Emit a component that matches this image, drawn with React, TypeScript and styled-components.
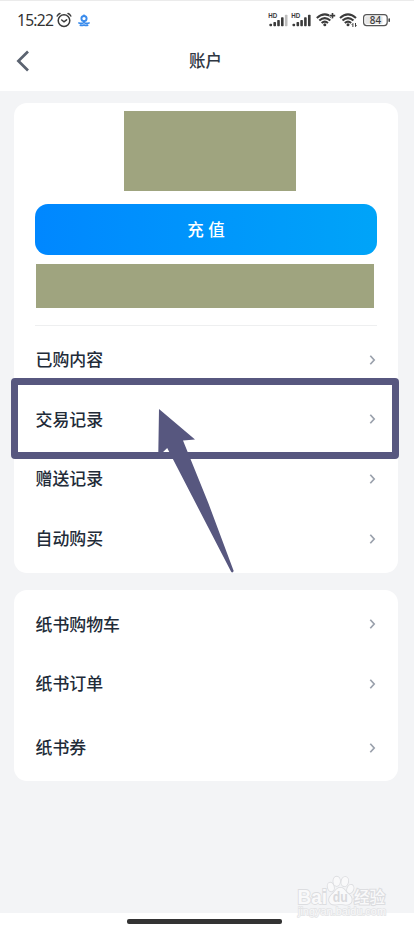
import React from "react";
import styled, { createGlobalStyle } from "styled-components";

const Global = createGlobalStyle`
  * { box-sizing: border-box; }
  body { margin: 0; background: #fff; }
`;

const Screen = styled.div`
  position: relative;
  width: 414px;
  height: 930px;
  overflow: hidden;
  display: flex;
  flex-direction: column;
  background: #fff;
  border-top: 1px solid #ebebeb;
  color: #222b38;
  font-family: "Noto Sans CJK SC", sans-serif;
`;

const StatusBar = styled.div`
  height: 38px;
  display: flex;
  align-items: center;
  padding: 0 23px 0 17px;
`;

const Clock = styled.span`
  width: 38px;
  font: 400 15.6px/20px "Noto Sans", sans-serif;
  letter-spacing: -0.75px;
  color: #333;
`;

const Icons = styled.svg`
  display: block;
  flex: none;
`;

const Spacer = styled.div`
  flex: 1;
`;

const NavBar = styled.header`
  height: 52px;
  display: grid;
  grid-template-columns: 60px 1fr 60px;
  align-items: center;
  padding-bottom: 8px;
`;

const BackIcon = styled.svg`
  margin-left: 14px;
`;

const Title = styled.h1`
  margin: 0;
  text-align: center;
  font-size: 16.5px;
  line-height: 24px;
  font-weight: 500;
  color: #2f3742;
  padding: 0 3px 2px 0;
`;

const Content = styled.main`
  height: 822px;
  display: flex;
  flex-direction: column;
  gap: 17px;
  padding: 12px 16px 0 14px;
  background: #f3f4f6;
`;

const Card = styled.section<{ $height: number; $top?: number }>`
  height: ${(p) => p.$height}px;
  padding: ${(p) => p.$top ?? 0}px 21px 0;
  display: flex;
  flex-direction: column;
  background: #fff;
  border-radius: 13px;
`;

const Redaction = styled.div<{ $w: number; $h: number; $left: number }>`
  flex: none;
  width: ${(p) => p.$w}px;
  height: ${(p) => p.$h}px;
  margin-left: ${(p) => p.$left}px;
  background: #9fa47f;
`;

const Recharge = styled.button`
  flex: none;
  height: 51px;
  margin: 13px 0 9px;
  padding: 0 0 2px;
  border: 0;
  border-radius: 13px;
  background: linear-gradient(90deg, #0087ff, #00a4f8);
  color: #fff;
  font: 500 16.5px/24px "Noto Sans CJK SC", sans-serif;
  word-spacing: 1px;
`;

const Divider = styled.div`
  flex: none;
  height: 1px;
  margin: 17px 0 4px;
  background: #eeeff0;
`;

const Row = styled.div<{ $height?: number }>`
  flex: none;
  height: ${(p) => p.$height ?? 59.6}px;
  display: flex;
  align-items: center;
  justify-content: space-between;
  padding: 0 1.5px 0 0.5px;
  font-size: 16.9px;
  line-height: 24px;
  font-weight: 500;
`;

const Label = styled.span`
  padding-bottom: 1px;
`;

const Chevron = styled.svg`
  display: block;
`;

const HomeArea = styled.footer`
  flex: 1;
  display: flex;
  justify-content: center;
  padding: 6px 5px 0 0;
`;

const HomeIndicator = styled.div`
  width: 155px;
  height: 4.5px;
  border-radius: 2px;
  background: #333;
`;

const Highlight = styled.div`
  position: absolute;
  left: 11px;
  top: 377px;
  width: 388px;
  height: 81px;
  border: 7px solid #57577f;
  border-radius: 4px;
`;

const Arrow = styled.svg`
  position: absolute;
  left: 155px;
  top: 404px;
`;

const Watermark = styled.svg`
  position: absolute;
  left: 290px;
  top: 869px;
`;

function StatusLeft() {
  return (
    <Icons width="38" height="20" viewBox="55 10 38 20" fill="none">
      <g stroke="#3b3b3b" strokeWidth="1.5" strokeLinecap="round">
        <circle cx="64" cy="20.6" r="5.8" />
        <path d="M57.2 16Q58.2 14.2 60 13.5M70.8 16Q69.8 14.2 68 13.5M61.7 20l2.3 1.8 2.6-2" />
      </g>
      <g stroke="#398bec">
        <circle cx="84" cy="18.6" r="2.6" strokeWidth="1.9" />
        <path d="M84 14.6v2M84 20.6v2" strokeWidth="1.4" />
        <path d="M78.3 22.6q2.8 1.6 5.7 0q2.9 1.6 5.7 0M79.7 24.9q2.1 .9 4.3 0q2.1 .9 4.3 0" strokeWidth="1.6" />
      </g>
    </Icons>
  );
}

function Signal({ x, faded }: { x: number; faded?: boolean }) {
  return (
    <g transform={`translate(${x} 0)`} fill="#3b3b3b">
      <text x="0" y="18.3" fontFamily="Liberation Sans" fontWeight="700" fontSize="6.6" textLength="9" lengthAdjust="spacingAndGlyphs">HD</text>
      <rect x="1.2" y="23.8" width="2.6" height="2.4" rx=".8" />
      <rect x="5.2" y="22" width="2.6" height="4.2" rx=".7" />
      <rect x="9" y="20" width="2.6" height="6.2" rx=".7" />
      <rect x="12.8" y="17.3" width="2.6" height="8.9" rx=".7" />
      <rect x="16.7" y="14.7" width="2.6" height="11.5" rx=".7" fill={faded ? "#bdbdbd" : "#3b3b3b"} />
    </g>
  );
}

function Wifi({ x }: { x: number }) {
  return (
    <g transform={`translate(${x} 0)`}>
      <path d="M-8 18Q0 10.8 8 18M-5.5 20.6Q0 15.6 5.5 20.6M-3.2 23Q0 20.2 3.2 23" fill="none" stroke="#3b3b3b" strokeWidth="2" />
      <circle cx="0" cy="24.8" r="1.5" fill="#3b3b3b" />
    </g>
  );
}

function StatusRight() {
  return (
    <Icons width="124" height="20" viewBox="267 10 124 20">
      <Signal x={268.2} faded />
      <Signal x={291.3} />
      <Wifi x={324.8} />
      <path d="M329.5 15.6h6M332.5 12.6v6" stroke="#fff" strokeWidth="3" />
      <path d="M329.8 15.6h5.4M332.5 12.9v5.4" stroke="#3b3b3b" strokeWidth="1.6" />
      <Wifi x={348} />
      <path d="M352.9 27v-3.5l-1.1 1.2M355.5 23v3.6l1.1-1.2" fill="none" stroke="#fff" strokeWidth="2.5" />
      <path d="M352.9 27v-3.5l-1.1 1.2M355.5 23v3.6l1.1-1.2" fill="none" stroke="#3b3b3b" strokeWidth="1" />
      <rect x="363.6" y="14.6" width="23.6" height="11" rx="3" fill="#fff" stroke="#555" strokeWidth="1.2" />
      <rect x="365.2" y="16.2" width="17.3" height="7.8" rx="1" fill="#e6e6e6" />
      <rect x="388.4" y="18.3" width="1.6" height="3.6" rx=".7" fill="#444" />
      <text x="375.4" y="23.7" textAnchor="middle" fontFamily="Noto Sans" fontWeight="500" fontSize="9.8" fill="#3d3d3d">84</text>
    </Icons>
  );
}

function MenuRow({ label, height }: { label: string; height?: number }) {
  return (
    <Row $height={height}>
      <Label>{label}</Label>
      <Chevron width="7" height="12" viewBox="0 0 7 12" fill="none">
        <path d="M1.3 1.7L5.2 6 1.3 10.3" stroke="#9aa1ac" strokeWidth="1.7" />
      </Chevron>
    </Row>
  );
}

export default function App() {
  return (
    <>
      <Global />
      <Screen>
        <StatusBar>
          <Clock>15:22</Clock>
          <StatusLeft />
          <Spacer />
          <StatusRight />
        </StatusBar>
        <NavBar>
          <BackIcon width="16" height="24" viewBox="0 0 16 24" fill="none">
            <path d="M14 2.5L4.4 12 14 21.5" stroke="#5b6370" strokeWidth="2.7" />
          </BackIcon>
          <Title>账户</Title>
        </NavBar>
        <Content>
          <Card $height={470} $top={8}>
            <Redaction $w={172} $h={80} $left={89} />
            <Recharge>充 值</Recharge>
            <Redaction $w={338} $h={44} $left={1} />
            <Divider />
            <MenuRow label="已购内容" />
            <MenuRow label="交易记录" />
            <MenuRow label="赠送记录" />
            <MenuRow label="自动购买" />
          </Card>
          <Card $height={191} $top={4.4}>
            <MenuRow label="纸书购物车" />
            <MenuRow label="纸书订单" />
            <MenuRow label="纸书券" height={68} />
          </Card>
        </Content>
        <HomeArea>
          <HomeIndicator />
        </HomeArea>
        <Highlight />
        <Arrow width="84" height="172" viewBox="155 405 84 172">
          <path d="M159 409L195 439.5 183 440.5 208.3 503 233.7 571Q232.5 573.5 231 571.5L167.2 448 162 453H158.3z" fill="#57577f" />
        </Arrow>
        <Watermark width="110" height="52" viewBox="290 870 110 52">
          <g fill="#f9f9fa" stroke="#dcdde0" strokeWidth="1.8" paintOrder="stroke" fontFamily="Liberation Sans" fontWeight="700">
            <text x="297.5" y="903.5" fontSize="20.5" textLength="29.5" lengthAdjust="spacingAndGlyphs">Bai</text>
            <ellipse cx="330.8" cy="887" rx="3" ry="4.3" transform="rotate(-15 330.8 887)" />
            <ellipse cx="336.7" cy="881.3" rx="3.3" ry="4.6" />
            <ellipse cx="344.8" cy="881.6" rx="3.3" ry="4.6" transform="rotate(12 344.8 881.6)" />
            <ellipse cx="350.3" cy="889" rx="3" ry="4.3" transform="rotate(20 350.3 889)" />
            <path d="M340.3 887.8Q344 887.8 346.5 892.5Q353 897 351.5 901.5Q350 905.5 344 904.4Q340.3 903.5 336.5 904.4Q330.5 905.3 329.2 901Q328.5 897 333.5 893Q337 887.8 340.3 887.8z" />
            <text x="332.7" y="902.3" fontSize="14" textLength="15" lengthAdjust="spacingAndGlyphs" fill="#d9dadd" stroke="none">du</text>
            <text x="354" y="902.5" fontSize="15.5" textLength="31" fontFamily="Noto Sans CJK SC" fontWeight="500" strokeWidth="2.2">经验</text>
            <text x="298" y="915.3" fontSize="10.5" textLength="88" lengthAdjust="spacingAndGlyphs" fontWeight="400" fill="#f8f8f9" strokeWidth="1.4" stroke="#e2e3e5">jingyan.baidu.com</text>
          </g>
        </Watermark>
      </Screen>
    </>
  );
}
